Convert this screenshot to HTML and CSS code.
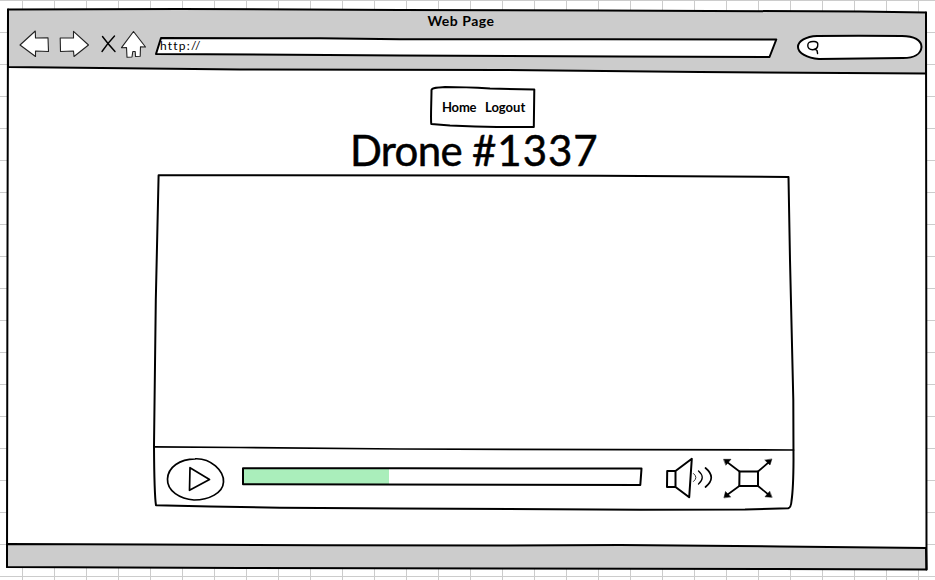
FILE: index.html
```html
<!DOCTYPE html>
<html lang="en">
<head>
<meta charset="utf-8">
<title>Web Page</title>
<link rel="stylesheet" href="styles.css">
</head>
<body>
<div class="window">
  <svg class="frame" viewBox="7 9 920 561" aria-hidden="true">
    <path class="paper" d="M8 9.5L926 12.5L926.5 569.5L7 567.5Z"/>
    <path class="chrome" d="M8 9.5L180 9L400 10L600 10.5L860 11.5L926 12.5V73.5L700 72L500 70L240 69.5L8 67Z"/>
    <path class="chrome" d="M7 544L150 544.5L320 545.2L500 545.5L620 545L780 546.5L926 548L926.5 569.5L780 569L500 568.5L240 568L7 567Z"/>
    <path class="line" d="M8 9.5L7.4 300L7 567"/>
    <path class="line" d="M926 12.5L926.3 300L926.5 569.5"/>
  </svg>
  <header class="top">
    <div class="caption"><span>Web Page</span></div>
    <div class="toolbar">
      <svg class="arrow" viewBox="20 33 29 34"><path class="thin" d="M20 45L35.3 31L35.5 38L48 37.7L48.5 51.5L35.5 51V56.5Z"/></svg>
      <svg class="arrow" viewBox="60 33 29 34"><path class="thin" d="M60.2 38H73.5V31.3L88.5 45L74 56.5L73.5 51L60.5 51.5Z"/></svg>
      <svg class="stop" viewBox="102 33 13 34"><path class="cross" d="M102.5 36.5Q108 44 115 51.5M114.5 36Q107 44 102 51.5"/></svg>
      <svg class="home" viewBox="121 33 25 34"><path class="thin" d="M133.5 31.5L145.5 47L140.5 46.8L140.2 56.3L135.5 56.5L135.2 51.5H132.8L132 57L127 57.3L126.5 47.5L121.5 47.7Z"/></svg>
      <div class="url">
        <svg class="frame" viewBox="156 33 620 34"><path class="box" d="M161 38L320 38.3L400 39.3L600 39.2L776.3 39.5L769.5 57L620 56.5L400 55.5L156 54Z"/></svg>
        <span>http://</span>
      </div>
      <svg class="search" viewBox="797 33 125 34"><path class="box" d="M817 36Q858 35.5 902 36C914 36 921.5 40 921.5 47C921 54 914 58 903 58Q850 58.5 819 59C807 58 798 53 798 47C798 41 806 36.5 817 36Z"/><path class="lens" d="M809 42.5C811.5 41 817.5 41 817.8 44C818 47.5 816 49.5 812.8 49.7C809.5 49.8 807.5 48 807.8 45C808 43.3 808.5 42.8 809 42.5M814.8 49L817 50.5L817.6 53.5"/></svg>
    </div>
  </header>
  <main class="content">
    <nav class="menu">
      <svg class="frame" viewBox="430 86 105 42"><path class="line" d="M431.5 90C432 87.5 437 87.5 445 87Q465 87 490 88.5L534.3 89.5L533.8 127H497L475 126.5L450 125.5L431.3 124C430.5 120 431.5 100 431.5 90Z"/></svg>
      <a class="to-home">Home</a><a class="to-logout">Logout</a>
    </nav>
    <h1><span class="name">Drone </span><span class="number">#1337</span></h1>
    <section class="player">
      <svg class="frame" viewBox="154 175 640 335"><path class="line" d="M158.6 175.2L600 175.7L788.5 177L790 260L793.3 400L793.5 460Q793.4 488 791.5 501Q791 508 788 508.3L745 509.5L640 509.8L400 508.5L280 507.8L210 506.5L156 505.3Q154.3 495 154 446L155.8 300Z"/><path class="divider" d="M154 446.8L240 447.5L400 449L620 449.7L793.5 450"/></svg>
      <div class="screen"></div>
      <div class="controls">
        <svg class="play" viewBox="167 448 57 60"><path class="control" d="M195 458.8C211 458 224 471 223.5 482C223 493 209 500 194 500C180 499 167 491 167.5 479C168 467 180 459 195 458.8ZM190 467.7L209.5 479.5L189.5 490.3Z"/></svg>
        <svg class="progress" viewBox="242 448 400 60"><path class="loaded" d="M243 468H389V485H243Z"/><path class="line" d="M243 468.2L400 468.3L641.5 468.6L640.3 485L243 484.3Z"/></svg>
        <svg class="sound" viewBox="666 448 47 60"><path class="line" d="M667.2 471H675.5V487H667ZM675.5 471L691.8 458.8L689.2 497.3L675.5 487"/><path class="wave1" d="M693.5 473.5Q698.5 477.5 693.5 481.5"/><path class="wave2" d="M698.5 471Q706 477.5 698.5 484"/><path class="wave3" d="M705.5 468Q717 477.5 705.5 487"/></svg>
        <svg class="expand" viewBox="723 448 49 60"><path class="line" d="M739.5 471.5H758V486H739.3Z"/><path class="control" d="M739.5 471.5L727 462M758 471.5L769 462M739.3 486L727 495M758 486L769 495"/><path class="tips" d="M723.8 459.3H731L726 465ZM771.8 459.3L770 465L765 460.3ZM724 497.5L725.5 491.5L730.5 496.8ZM771.8 497.3L765 496.8L769.5 491.5Z"/></svg>
      </div>
    </section>
  </main>
</div>
</body>
</html>
```
FILE: styles.css
```css
* { box-sizing: border-box; }
body {
  margin: 0;
  width: 935px;
  height: 580px;
  padding: 9px 8px 10px 7px;
  overflow: hidden;
  color: #000;
  font-family: "Comic Sans MS", Lato, sans-serif;
  background:
    repeating-linear-gradient(90deg, transparent 0 22px, #ccc 22px 23px, transparent 23px 32px),
    repeating-linear-gradient(#ccc 0 1px, transparent 1px 32px),
    #fff;
}
svg { display: block; overflow: visible; flex: none; fill: none; stroke: #000; stroke-linejoin: round; stroke-linecap: round; }
.frame { position: absolute; inset: 0; width: 100%; height: 100%; }
.window { position: relative; width: 920px; height: 561px; }
.paper { fill: #fff; stroke: none; }
.chrome { fill: #ccc; stroke-width: 2; }
.line { stroke-width: 2; }
.box { fill: #fff; stroke-width: 2; }
.thin { fill: #fff; stroke: #222; stroke-width: 1.1; }
.cross, .lens { stroke-width: 1.4; }
.divider { stroke-width: 1.7; }
.control { stroke-width: 1.7; }
.loaded { fill: #aaeebb; stroke: none; }
.wave1 { stroke-width: 0.8; }
.wave2 { stroke-width: 1.3; }
.wave3 { stroke-width: 1.7; }
.tips { fill: #000; stroke-width: 0.5; }

.top { position: relative; height: 60px; }
.caption { height: 24px; padding-right: 12px; display: flex; justify-content: center; font-weight: 700; font-size: 14px; line-height: 24px; letter-spacing: 0.5px; }
.toolbar { display: flex; height: 34px; padding-left: 13px; }
.toolbar svg { height: 34px; }
.arrow { width: 29px; margin-right: 11px; }
.stop { width: 13px; margin: 0 6px 0 2px; }
.home { width: 25px; margin-right: 10px; }
.url { position: relative; width: 620px; margin-right: 21px; padding-left: 4px; font-size: 12px; line-height: 26px; letter-spacing: 1.2px; }
.url span { position: relative; }
.search { width: 125px; }

.content { position: relative; display: flex; flex-direction: column; padding-top: 17px; }
.menu { position: relative; width: 105px; height: 42px; margin-left: 423px; padding-left: 12px; display: flex; gap: 9px; font-weight: 700; font-size: 13px; line-height: 42px; }
.to-home { width: 34px; letter-spacing: -0.2px; }
.to-logout { letter-spacing: 0; }
h1 { margin: 0 0 0 343px; height: 47px; font-weight: 400; font-size: 42px; line-height: 45px; white-space: nowrap; -webkit-text-stroke: 0.5px #000; }
.name { letter-spacing: -0.7px; }
.number { letter-spacing: 1px; }
.player { position: relative; width: 640px; height: 335px; margin-left: 147px; }
.screen { height: 273px; }
.controls { display: flex; height: 60px; padding-left: 13px; }
.controls svg { height: 60px; }
.play { width: 57px; margin-right: 18px; }
.progress { width: 400px; margin-right: 24px; }
.sound { width: 47px; margin-right: 10px; }
.expand { width: 49px; }
```
